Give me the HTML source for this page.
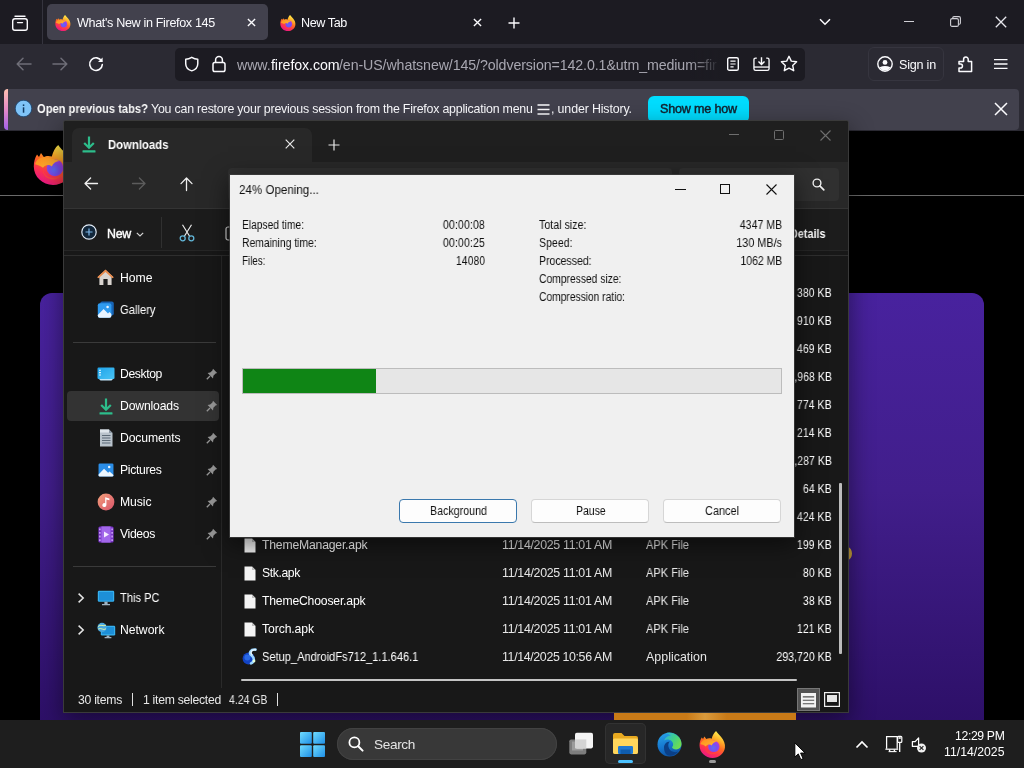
<!DOCTYPE html>
<html><head><meta charset="utf-8"><title>Screenshot</title>
<style>
*{box-sizing:border-box;margin:0;padding:0}
html,body{width:1024px;height:768px;overflow:hidden;background:#000;font-family:"Liberation Sans",sans-serif;}
.a{position:absolute}
.t{position:absolute;white-space:pre;line-height:1;will-change:transform}
svg{position:absolute;overflow:visible}
/* firefox chrome */
#tabs{left:0;top:0;width:1024px;height:44px;background:#1c1b22}
#atab{left:47px;top:4px;width:221px;height:36px;background:#42414d;border-radius:5px}
#nav{left:0;top:44px;width:1024px;height:87px;background:#2b2a33}
#url{left:175px;top:48px;width:630px;height:33px;background:#1c1b22;border-radius:5px}
#nbar{left:4px;top:89px;width:1015px;height:40.5px;background:#42414d;border-radius:4px}
#nbarL{left:4px;top:89px;width:3.5px;height:41px;border-radius:4px 0 0 4px;background:linear-gradient(#ffc0b0,#e58ac8 50%,#a060e8)}
#smh{left:648px;top:96px;width:101px;height:27px;background:#00ddff;border-radius:6px}
/* page */
#hline{left:0;top:195px;width:1024px;height:1px;background:#6a6a6a}
#card{left:40px;top:293px;width:944px;height:440px;background:linear-gradient(180deg,#48229e 0%,#411e8b 45%,#2c0f66 100%);border-radius:12px}
/* explorer */
#ex{left:64px;top:121px;width:784px;height:591px;background:#181818;border-radius:2px 2px 0 0;overflow:hidden;box-shadow:0 0 0 1px #3a3a3a,0 8px 24px 2px rgba(0,0,0,.45)}
/* taskbar */
#tb{left:0;top:720px;width:1024px;height:48px;background:#1e1e1e}
/* 7zip */
#dlg{left:230px;top:175px;width:564px;height:362px;background:#f0f0f0;box-shadow:0 0 0 1px rgba(60,60,60,.8),0 6px 22px 2px rgba(0,0,0,.5)}
</style></head><body>

<!-- FIREFOX -->
<div class="a" id="tabs"></div>
<div class="a" id="atab"></div>
<div class="a" id="nav"></div>
<div class="a" id="url"></div>
<div class="a" id="nbar"></div><div class="a" id="nbarL"></div>
<div class="a" id="smh"></div>
<div class="a" style="left:42.3px;top:0px;width:1px;height:44px;background:#35343e;"></div>
<svg style="left:11px;top:14px;" width="18" height="18" viewBox="0 0 18 18"><rect x="1.7" y="4.7" width="14.6" height="11.6" rx="2.2" fill="none" stroke="#fbfbfe" stroke-width="1.4"/><path d="M4 2.2h10" stroke="#fbfbfe" stroke-width="1.4" stroke-linecap="round"/><path d="M6.5 8.6h5" stroke="#fbfbfe" stroke-width="1.4" stroke-linecap="round"/></svg>
<svg style="left:55px;top:14.5px;" width="16" height="16" viewBox="0 0 100 100"><defs>
<linearGradient id="fa1" x1="0.8" y1="0" x2="0.3" y2="1"><stop offset="0.05" stop-color="#fff14f"/><stop offset="0.3" stop-color="#ffb02a"/><stop offset="0.52" stop-color="#ff6a22"/><stop offset="0.75" stop-color="#ff3350"/><stop offset="1" stop-color="#e8158a"/></linearGradient>
<radialGradient id="fb1" cx="0.45" cy="0.62" r="0.6"><stop offset="0" stop-color="#5b6df8"/><stop offset="0.55" stop-color="#7a4df0"/><stop offset="1" stop-color="#b13be0"/></radialGradient>
<linearGradient id="fc1" x1="0" y1="0" x2="1" y2="0.8"><stop offset="0" stop-color="#ff8a1c"/><stop offset="1" stop-color="#ffb830"/></linearGradient></defs>
<path d="M10 24 L15 30 L20 20 L27 30 C32 27 40 26 47 29 C50 16 56 6 63 0 C68 8 76 14 82 22 C92 34 98 48 96 62 C93 84 74 100 50 100 C24 100 2 80 2 54 C2 42 5 32 10 24 Z" fill="url(#fa1)"/>
<circle cx="55" cy="57" r="21" fill="url(#fb1)"/>
<path d="M5 48 C10 32 28 26 44 33 C52 37 60 35 66 40 C58 41 50 45 47 54 C41 48 31 49 25 57 C19 51 11 50 5 48 Z" fill="url(#fc1)"/>
<path d="M25 57 C24 70 34 82 50 82 C62 82 72 76 76 66 C72 78 60 88 46 86 C32 84 22 72 25 57 Z" fill="#ff5a2a" opacity="0.55"/></svg>
<div class="t" style="left:76.5px;top:16.8px;font-size:12.6px;color:#fbfbfe;letter-spacing:-0.346px;">What&#x27;s New in Firefox 145</div>
<svg style="left:246.5px;top:18px;" width="9" height="9" viewBox="0 0 10 10"><path d="M1 1L9 9M9 1L1 9" stroke="#fbfbfe" stroke-width="1.5"/></svg>
<svg style="left:280px;top:14.5px;" width="16" height="16" viewBox="0 0 100 100"><defs>
<linearGradient id="fa2" x1="0.8" y1="0" x2="0.3" y2="1"><stop offset="0.05" stop-color="#fff14f"/><stop offset="0.3" stop-color="#ffb02a"/><stop offset="0.52" stop-color="#ff6a22"/><stop offset="0.75" stop-color="#ff3350"/><stop offset="1" stop-color="#e8158a"/></linearGradient>
<radialGradient id="fb2" cx="0.45" cy="0.62" r="0.6"><stop offset="0" stop-color="#5b6df8"/><stop offset="0.55" stop-color="#7a4df0"/><stop offset="1" stop-color="#b13be0"/></radialGradient>
<linearGradient id="fc2" x1="0" y1="0" x2="1" y2="0.8"><stop offset="0" stop-color="#ff8a1c"/><stop offset="1" stop-color="#ffb830"/></linearGradient></defs>
<path d="M10 24 L15 30 L20 20 L27 30 C32 27 40 26 47 29 C50 16 56 6 63 0 C68 8 76 14 82 22 C92 34 98 48 96 62 C93 84 74 100 50 100 C24 100 2 80 2 54 C2 42 5 32 10 24 Z" fill="url(#fa2)"/>
<circle cx="55" cy="57" r="21" fill="url(#fb2)"/>
<path d="M5 48 C10 32 28 26 44 33 C52 37 60 35 66 40 C58 41 50 45 47 54 C41 48 31 49 25 57 C19 51 11 50 5 48 Z" fill="url(#fc2)"/>
<path d="M25 57 C24 70 34 82 50 82 C62 82 72 76 76 66 C72 78 60 88 46 86 C32 84 22 72 25 57 Z" fill="#ff5a2a" opacity="0.55"/></svg>
<div class="t" style="left:301.0px;top:16.8px;font-size:12.6px;color:#fbfbfe;letter-spacing:-0.399px;">New Tab</div>
<svg style="left:472.5px;top:18px;" width="9" height="9" viewBox="0 0 10 10"><path d="M1 1L9 9M9 1L1 9" stroke="#fbfbfe" stroke-width="1.5"/></svg>
<svg style="left:508px;top:16.7px;" width="12" height="12" viewBox="0 0 12 12"><path d="M6 0.5V11.5M0.5 6H11.5" stroke="#fbfbfe" stroke-width="1.4"/></svg>
<svg style="left:819px;top:18px;" width="12" height="8" viewBox="0 0 12 8"><path d="M1 1.2L6 6.2L11 1.2" fill="none" stroke="#fbfbfe" stroke-width="1.5"/></svg>
<div class="a" style="left:904px;top:21px;width:10px;height:1px;background:#d0d0d6;"></div>
<svg style="left:950px;top:16px;" width="11" height="11" viewBox="0 0 11 11"><rect x="0.6" y="2.6" width="7.8" height="7.8" rx="1.5" fill="none" stroke="#d0d0d6" stroke-width="1.1"/><path d="M2.8 2.4V1.8Q2.8 0.6 4 0.6H9Q10.4 0.6 10.4 2V7Q10.4 8.2 9.2 8.2H8.6" fill="none" stroke="#d0d0d6" stroke-width="1.1"/></svg>
<svg style="left:995px;top:16px;" width="12" height="12" viewBox="0 0 12 12"><path d="M0.8 0.8L11.2 11.2M11.2 0.8L0.8 11.2" stroke="#e8e8ee" stroke-width="1.3"/></svg>
<svg style="left:16px;top:57px;" width="16" height="14" viewBox="0 0 16 14"><path d="M15 7H1.5M7 1.2L1.2 7L7 12.8" fill="none" stroke="#6f6e78" stroke-width="1.5" stroke-linecap="round" stroke-linejoin="round"/></svg>
<svg style="left:52px;top:57px;" width="16" height="14" viewBox="0 0 16 14"><path d="M1 7H14.5M9 1.2L14.8 7L9 12.8" fill="none" stroke="#6f6e78" stroke-width="1.5" stroke-linecap="round" stroke-linejoin="round"/></svg>
<svg style="left:88px;top:56px;" width="16" height="16" viewBox="0 0 16 16"><path d="M13.6 5.2A6.3 6.3 0 1 0 14.3 8.6" fill="none" stroke="#fbfbfe" stroke-width="1.6" stroke-linecap="round"/><path d="M14.6 1.4V6H10Z" fill="#fbfbfe"/></svg>
<svg style="left:183.5px;top:56px;" width="15.5" height="16" viewBox="0 0 18 18"><path d="M9 1.2C11.5 2.8 13.8 3.4 16 3.4V8.6C16 12.6 13 15.6 9 17C5 15.6 2 12.6 2 8.6V3.4C4.2 3.4 6.5 2.8 9 1.2Z" fill="none" stroke="#fbfbfe" stroke-width="1.7" stroke-linejoin="round"/></svg>
<svg style="left:212px;top:55px;" width="14" height="18" viewBox="0 0 14 18"><rect x="1" y="7.6" width="12" height="9" rx="1.8" fill="none" stroke="#fbfbfe" stroke-width="1.5"/><path d="M3.6 7.4V5A3.4 3.4 0 0 1 10.4 5V7.4" fill="none" stroke="#fbfbfe" stroke-width="1.5"/></svg>
<div class="t" style="left:237.0px;top:58.2px;font-size:14.2px;color:#a8a7b1;letter-spacing:-0.108px;">www.</div>
<div class="t" style="left:270.5px;top:58.2px;font-size:14.2px;color:#fbfbfe;letter-spacing:-0.080px;">firefox.com</div>
<div class="t" style="left:339.0px;top:58.2px;font-size:14.2px;color:#a8a7b1;letter-spacing:-0.090px;">/en-US/whatsnew/145/?oldversion=142.0.1&amp;utm_medium=fir</div>
<div class="a" style="left:690px;top:50px;width:30px;height:29px;background:linear-gradient(90deg,rgba(28,27,34,0),#1c1b22);"></div>
<svg style="left:727px;top:57px;" width="12" height="14" viewBox="0 0 12 14"><rect x="0.7" y="0.7" width="10.6" height="12.6" rx="1.6" fill="none" stroke="#fbfbfe" stroke-width="1.4"/><path d="M3.4 4.2H8.6M3.4 7H8.6M3.4 9.8H6.6" stroke="#fbfbfe" stroke-width="1.2"/></svg>
<svg style="left:752.6px;top:56px;" width="17" height="15.5" viewBox="0 0 18 16"><path d="M4 2H2.8Q1 2 1 3.8V13.2Q1 15 2.8 15H15.2Q17 15 17 13.2V3.8Q17 2 15.2 2H14" fill="none" stroke="#fbfbfe" stroke-width="1.4"/><path d="M1 11.5H17" stroke="#fbfbfe" stroke-width="1.4"/><path d="M9 1V8.5M5.8 5.6L9 8.8L12.2 5.6" fill="none" stroke="#fbfbfe" stroke-width="1.5"/></svg>
<svg style="left:780px;top:55px;" width="18" height="17" viewBox="0 0 18 17"><path d="M9 1.3L11.3 6.1L16.6 6.8L12.7 10.4L13.7 15.7L9 13.1L4.3 15.7L5.3 10.4L1.4 6.8L6.7 6.1Z" fill="none" stroke="#fbfbfe" stroke-width="1.4" stroke-linejoin="round"/></svg>
<div class="a" style="left:868px;top:47px;width:76px;height:34px;background:transparent;border:1px solid #36353f;border-radius:6px;"></div>
<svg style="left:876.8px;top:56.2px;" width="16" height="16" viewBox="0 0 16 16"><circle cx="8" cy="8" r="7.2" fill="none" stroke="#fbfbfe" stroke-width="1.4"/><circle cx="8" cy="6.4" r="2.4" fill="#fbfbfe"/><path d="M2.6 11.2Q8 8.6 13.4 11.2Q11.5 14.6 8 14.6Q4.5 14.6 2.6 11.2Z" fill="#fbfbfe"/></svg>
<div class="t" style="left:898.6px;top:58.5px;font-size:12.6px;color:#fbfbfe;letter-spacing:-0.218px;">Sign in</div>
<svg style="left:957px;top:55px;" width="17" height="18" viewBox="0 0 17 18"><path d="M2 6.6H6.6V4.3A2.3 2.3 0 0 1 11.2 4.3V6.6H14.6V16.6H2V13.1H3.4A2.05 2.05 0 0 0 3.4 9H2Z" fill="none" stroke="#fbfbfe" stroke-width="1.5" stroke-linejoin="round"/></svg>
<svg style="left:993.5px;top:58px;" width="14" height="12" viewBox="0 0 14 12"><path d="M0 1.6H13.5M0 6H13.5M0 10.4H13.5" stroke="#fbfbfe" stroke-width="1.4"/></svg>
<svg style="left:15px;top:100px;" width="17" height="17" viewBox="0 0 17 17"><circle cx="8.5" cy="8.5" r="8" fill="#7fc4f8"/><circle cx="8.5" cy="8.5" r="8.3" fill="none" stroke="#1d4f80" stroke-width="0.8"/><rect x="7.8" y="7.3" width="1.5" height="5.4" fill="#103a63"/><rect x="7.8" y="4.4" width="1.5" height="1.6" fill="#103a63"/></svg>
<div class="t" style="left:37.0px;top:102.9px;font-size:12.4px;color:#ffffff;transform:scaleX(0.9000);transform-origin:left center;font-weight:700;">Open previous tabs?</div>
<div class="t" style="left:151.0px;top:102.9px;font-size:12.4px;color:#fbfbfe;letter-spacing:-0.215px;">You can restore your previous session from the Firefox application menu</div>
<svg style="left:537px;top:104px;" width="13" height="11" viewBox="0 0 13 11"><path d="M0.5 1H12.5M0.5 5.5H12.5M0.5 10H12.5" stroke="#fbfbfe" stroke-width="1.4"/></svg>
<div class="t" style="left:551.0px;top:102.9px;font-size:12.4px;color:#fbfbfe;letter-spacing:-0.135px;">, under History.</div>
<div class="t" style="left:660.0px;top:103.3px;font-size:12.6px;color:#12202e;letter-spacing:-0.194px;-webkit-text-stroke:0.45px #12202e;">Show me how</div>
<svg style="left:994px;top:102px;" width="14" height="14" viewBox="0 0 14 14"><path d="M1 1L13 13M13 1L1 13" stroke="#fbfbfe" stroke-width="1.5"/></svg>


<!-- PAGE -->
<div class="a" id="hline"></div>
<div class="a" id="card"></div>
<svg style="left:32.5px;top:145px;" width="40" height="40" viewBox="0 0 100 100"><defs>
<linearGradient id="fap" x1="0.8" y1="0" x2="0.3" y2="1"><stop offset="0.05" stop-color="#fff14f"/><stop offset="0.3" stop-color="#ffb02a"/><stop offset="0.52" stop-color="#ff6a22"/><stop offset="0.75" stop-color="#ff3350"/><stop offset="1" stop-color="#e8158a"/></linearGradient>
<radialGradient id="fbp" cx="0.45" cy="0.62" r="0.6"><stop offset="0" stop-color="#5b6df8"/><stop offset="0.55" stop-color="#7a4df0"/><stop offset="1" stop-color="#b13be0"/></radialGradient>
<linearGradient id="fcp" x1="0" y1="0" x2="1" y2="0.8"><stop offset="0" stop-color="#ff8a1c"/><stop offset="1" stop-color="#ffb830"/></linearGradient></defs>
<path d="M10 24 L15 30 L20 20 L27 30 C32 27 40 26 47 29 C50 16 56 6 63 0 C68 8 76 14 82 22 C92 34 98 48 96 62 C93 84 74 100 50 100 C24 100 2 80 2 54 C2 42 5 32 10 24 Z" fill="url(#fap)"/>
<circle cx="55" cy="57" r="21" fill="url(#fbp)"/>
<path d="M5 48 C10 32 28 26 44 33 C52 37 60 35 66 40 C58 41 50 45 47 54 C41 48 31 49 25 57 C19 51 11 50 5 48 Z" fill="url(#fcp)"/>
<path d="M25 57 C24 70 34 82 50 82 C62 82 72 76 76 66 C72 78 60 88 46 86 C32 84 22 72 25 57 Z" fill="#ff5a2a" opacity="0.55"/></svg>
<div class="a" style="left:843px;top:547px;width:9px;height:13px;background:#c9a23a;border-radius:50%;"></div>


<!-- EXPLORER -->
<div class="a" id="ex">
<div class="a" style="left:0px;top:0px;width:784px;height:41px;background:#1f1f1f;"></div>
<div class="a" style="left:8px;top:7px;width:240px;height:36px;background:#282828;border-radius:7px 7px 0 0;"></div>
<div class="a" style="left:0px;top:41px;width:784px;height:46px;background:#282828;"></div>
<div class="a" style="left:0px;top:87px;width:784px;height:1px;background:#343434;"></div>
<div class="a" style="left:0px;top:88px;width:784px;height:41px;background:#1c1c1c;"></div>
<div class="a" style="left:0px;top:129px;width:784px;height:1px;background:#262626;"></div>
<div class="a" style="left:0px;top:134px;width:784px;height:1px;background:#2e2e2e;"></div>
<svg style="left:18px;top:14.5px;" width="14.0" height="17.0" viewBox="0 0 14 17"><path d="M7 0.5V11.5M2.2 7L7 11.8L11.8 7" fill="none" stroke="#2dbd8b" stroke-width="2.2"/><rect x="0.5" y="14.2" width="13" height="2.3" rx="0.6" fill="#2dbd8b"/></svg>
<div class="t" style="left:43.5px;top:18.3px;font-size:12.2px;color:#ffffff;transform:scaleX(0.9298);transform-origin:left center;font-weight:700;">Downloads</div>
<svg style="left:221px;top:18px;" width="10" height="10" viewBox="0 0 10 10"><path d="M0.7 0.7L9.3 9.3M9.3 0.7L0.7 9.3" stroke="#e8e8e8" stroke-width="1.2"/></svg>
<svg style="left:264px;top:18px;" width="12" height="12" viewBox="0 0 12 12"><path d="M6 0.5V11.5M0.5 6H11.5" stroke="#e8e8e8" stroke-width="1.2"/></svg>
<div class="a" style="left:665px;top:13px;width:10px;height:1px;background:#6e6e6e;"></div>
<svg style="left:710px;top:9px;" width="10" height="10" viewBox="0 0 10 10"><rect x="0.5" y="0.5" width="9" height="9" rx="1" fill="none" stroke="#6e6e6e" stroke-width="1"/></svg>
<svg style="left:756px;top:9px;" width="11" height="11" viewBox="0 0 11 11"><path d="M0.5 0.5L10.5 10.5M10.5 0.5L0.5 10.5" stroke="#6e6e6e" stroke-width="1.1"/></svg>
<svg style="left:20px;top:56px;" width="14" height="13" viewBox="0 0 14 13"><path d="M13.5 6.5H1.2M6.6 1L1 6.5L6.6 12" fill="none" stroke="#f0f0f0" stroke-width="1.3" stroke-linecap="round" stroke-linejoin="round"/></svg>
<svg style="left:68px;top:56px;" width="14" height="13" viewBox="0 0 14 13"><path d="M0.5 6.5H12.8M7.4 1L13 6.5L7.4 12" fill="none" stroke="#5c5c5c" stroke-width="1.3" stroke-linecap="round" stroke-linejoin="round"/></svg>
<svg style="left:116px;top:56px;" width="13" height="14" viewBox="0 0 13 14"><path d="M6.5 13.5V1.2M1 6.6L6.5 1L12 6.6" fill="none" stroke="#f0f0f0" stroke-width="1.3" stroke-linecap="round" stroke-linejoin="round"/></svg>
<div class="a" style="left:164px;top:47px;width:444px;height:33px;background:#303030;border-radius:4px;"></div>
<div class="a" style="left:615px;top:47px;width:160px;height:33px;background:#303030;border-radius:4px;"></div>
<svg style="left:748px;top:57px;" width="13" height="13" viewBox="0 0 13 13"><circle cx="5" cy="5" r="3.9" fill="none" stroke="#f0f0f0" stroke-width="1.4"/><path d="M7.8 7.8L11.8 11.8" stroke="#f0f0f0" stroke-width="1.7" stroke-linecap="round"/></svg>
<svg style="left:17px;top:103px;" width="16" height="16" viewBox="0 0 16 16"><circle cx="8" cy="8" r="7.2" fill="#12273b" stroke="#dfe9f5" stroke-width="1.2"/><path d="M8 4.5V11.5M4.5 8H11.5" stroke="#7db7ea" stroke-width="1.2"/></svg>
<div class="t" style="left:42.5px;top:106.9px;font-size:12.4px;color:#ffffff;letter-spacing:-0.269px;-webkit-text-stroke:0.4px #fff;">New</div>
<svg style="left:72px;top:110.5px;" width="8" height="5" viewBox="0 0 8 5"><path d="M0.8 0.8L4 4L7.2 0.8" fill="none" stroke="#d0d0d0" stroke-width="1.2"/></svg>
<div class="a" style="left:97px;top:96px;width:1px;height:31px;background:#303030;"></div>
<svg style="left:115px;top:103px;" width="16" height="18" viewBox="0 0 16 18"><path d="M3.5 0.8L10.6 12.2M12.5 0.8L5.4 12.2" stroke="#e8e8e8" stroke-width="1.2"/><circle cx="3.7" cy="14.3" r="2.5" fill="none" stroke="#62b6d8" stroke-width="1.3"/><circle cx="12.3" cy="14.3" r="2.5" fill="none" stroke="#62b6d8" stroke-width="1.3"/></svg>
<svg style="left:161px;top:105px;" width="8" height="16" viewBox="0 0 8 16"><rect x="1" y="1" width="10" height="13" rx="2" fill="none" stroke="#d8d8d8" stroke-width="1.2"/></svg>
<div class="t" style="left:726.0px;top:107.0px;font-size:12.2px;color:#ffffff;transform:scaleX(0.8873);transform-origin:left center;font-weight:700;">Details</div>
<div class="a" style="left:157px;top:135px;width:1px;height:432px;background:#2a2a2a;"></div>
<svg style="left:33px;top:148px;" width="17" height="17" viewBox="0 0 17 17"><path d="M8.5 1L16.5 8.2H14.6V16H2.4V8.2H0.5Z" fill="#d9d4cf"/><path d="M8.5 0.6L16.8 8.2L15.4 9.2L8.5 3L1.6 9.2L0.2 8.2Z" fill="#e98a4b"/><rect x="6.4" y="10" width="4.2" height="6" fill="#1b1b1b"/></svg>
<div class="t" style="left:55.6px;top:151.0px;font-size:12.2px;color:#ffffff;letter-spacing:-0.011px;">Home</div>
<svg style="left:33px;top:180px;" width="18" height="18" viewBox="0 0 18 18"><rect x="3.2" y="0.6" width="13.6" height="14" rx="2" fill="#1764b5"/><rect x="0.8" y="2.2" width="13.6" height="14.6" rx="2" fill="#2f9bf0"/><path d="M0.8 14L6.6 8L11 12.4L12.4 11L14.4 13V14.8Q14.4 16.8 12.4 16.8H2.8Q0.8 16.8 0.8 14.8Z" fill="#e9f4ff"/><circle cx="10.6" cy="6" r="1.3" fill="#e9f4ff"/></svg>
<div class="t" style="left:55.6px;top:182.8px;font-size:12.2px;color:#ffffff;transform:scaleX(0.9187);transform-origin:left center;">Gallery</div>
<div class="a" style="left:9px;top:221px;width:143px;height:1px;background:#3a3a3a;"></div>
<svg style="left:33px;top:246px;" width="18" height="14" viewBox="0 0 18 14"><defs><linearGradient id="dg" x1="0" y1="0" x2="1" y2="1"><stop offset="0" stop-color="#1fa3ea"/><stop offset="1" stop-color="#49c4f4"/></linearGradient></defs><rect x="0.5" y="0.5" width="17" height="11.5" rx="1.2" fill="url(#dg)"/><path d="M2 3.2H4M2 5.6H4M2 8H4" stroke="#dff3ff" stroke-width="1.1"/><path d="M2 12H16L14.5 13.6H3.5Z" fill="#bfe6fb"/></svg>
<div class="t" style="left:55.6px;top:247.0px;font-size:12.2px;color:#ffffff;letter-spacing:-0.394px;">Desktop</div>
<svg style="left:142px;top:247px;" width="12" height="12" viewBox="0 0 12 12"><path d="M7 0.8L11.2 5L9.6 5.6L7.4 7.8L7 10.4L1.6 5L4.2 4.6L6.4 2.4Z" fill="#979797"/><path d="M4 8L0.8 11.2" stroke="#979797" stroke-width="1.3"/></svg>
<div class="a" style="left:3px;top:270px;width:152px;height:30px;background:#333333;border-radius:4px;"></div>
<svg style="left:35px;top:276.5px;" width="14.0" height="17.0" viewBox="0 0 14 17"><path d="M7 0.5V11.5M2.2 7L7 11.8L11.8 7" fill="none" stroke="#2dbd8b" stroke-width="2.2"/><rect x="0.5" y="14.2" width="13" height="2.3" rx="0.6" fill="#2dbd8b"/></svg>
<div class="t" style="left:55.6px;top:279.0px;font-size:12.2px;color:#ffffff;letter-spacing:-0.151px;">Downloads</div>
<svg style="left:142px;top:279px;" width="12" height="12" viewBox="0 0 12 12"><path d="M7 0.8L11.2 5L9.6 5.6L7.4 7.8L7 10.4L1.6 5L4.2 4.6L6.4 2.4Z" fill="#979797"/><path d="M4 8L0.8 11.2" stroke="#979797" stroke-width="1.3"/></svg>
<svg style="left:35px;top:308px;" width="14" height="18" viewBox="0 0 14 18"><path d="M1 0.5H10L13.5 4V17.5H1Z" fill="#b9c3cc"/><path d="M10 0.5V4H13.5Z" fill="#8a97a3"/><path d="M3 6.5H11.5M3 9H11.5M3 11.5H11.5M3 14H11.5" stroke="#5d6b78" stroke-width="1.1"/><rect x="1" y="0.5" width="9" height="3" fill="#dfe6ec"/></svg>
<div class="t" style="left:55.6px;top:311.0px;font-size:12.2px;color:#ffffff;letter-spacing:-0.134px;">Documents</div>
<svg style="left:142px;top:311px;" width="12" height="12" viewBox="0 0 12 12"><path d="M7 0.8L11.2 5L9.6 5.6L7.4 7.8L7 10.4L1.6 5L4.2 4.6L6.4 2.4Z" fill="#979797"/><path d="M4 8L0.8 11.2" stroke="#979797" stroke-width="1.3"/></svg>
<svg style="left:34px;top:341px;" width="16" height="16" viewBox="0 0 18 16"><rect x="0.6" y="0.6" width="16.8" height="14.8" rx="1.6" fill="#2b8ee8"/><path d="M0.6 13L6.8 6.6L11.4 11.2L13 9.6L17.4 13.6V13.8Q17.4 15.4 15.8 15.4H2.2Q0.6 15.4 0.6 13.8Z" fill="#eef7ff"/><circle cx="12.6" cy="4.6" r="1.4" fill="#eef7ff"/></svg>
<div class="t" style="left:55.6px;top:343.0px;font-size:12.2px;color:#ffffff;letter-spacing:-0.321px;">Pictures</div>
<svg style="left:142px;top:343px;" width="12" height="12" viewBox="0 0 12 12"><path d="M7 0.8L11.2 5L9.6 5.6L7.4 7.8L7 10.4L1.6 5L4.2 4.6L6.4 2.4Z" fill="#979797"/><path d="M4 8L0.8 11.2" stroke="#979797" stroke-width="1.3"/></svg>
<svg style="left:33px;top:372px;" width="18" height="18" viewBox="0 0 18 18"><defs><linearGradient id="mg" x1="0" y1="0" x2="1" y2="1"><stop offset="0" stop-color="#f3a07a"/><stop offset="1" stop-color="#d9536a"/></linearGradient></defs><circle cx="9" cy="9" r="8.4" fill="url(#mg)"/><path d="M8.2 4.2L12.4 5.4V7.2L9.4 6.4V12A2 2 0 1 1 8.2 10.2Z" fill="#fff"/></svg>
<div class="t" style="left:55.6px;top:375.0px;font-size:12.2px;color:#ffffff;letter-spacing:-0.072px;">Music</div>
<svg style="left:142px;top:375px;" width="12" height="12" viewBox="0 0 12 12"><path d="M7 0.8L11.2 5L9.6 5.6L7.4 7.8L7 10.4L1.6 5L4.2 4.6L6.4 2.4Z" fill="#979797"/><path d="M4 8L0.8 11.2" stroke="#979797" stroke-width="1.3"/></svg>
<svg style="left:34px;top:404.5px;" width="16" height="17" viewBox="0 0 16 17"><rect x="0.4" y="0.4" width="15.2" height="16.2" rx="1.6" fill="#7a35c8"/><rect x="3.4" y="0.4" width="9.2" height="16.2" fill="#a267ea"/><path d="M1.9 2.4V15" stroke="#d9b8ff" stroke-width="1.3" stroke-dasharray="1.8 1.8"/><path d="M14.1 2.4V15" stroke="#d9b8ff" stroke-width="1.3" stroke-dasharray="1.8 1.8"/><path d="M6 5.4L11 8.5L6 11.6Z" fill="#f6ecff"/></svg>
<div class="t" style="left:55.6px;top:407.0px;font-size:12.2px;color:#ffffff;letter-spacing:-0.347px;">Videos</div>
<svg style="left:142px;top:407px;" width="12" height="12" viewBox="0 0 12 12"><path d="M7 0.8L11.2 5L9.6 5.6L7.4 7.8L7 10.4L1.6 5L4.2 4.6L6.4 2.4Z" fill="#979797"/><path d="M4 8L0.8 11.2" stroke="#979797" stroke-width="1.3"/></svg>
<div class="a" style="left:9px;top:445px;width:143px;height:1px;background:#3a3a3a;"></div>
<svg style="left:14px;top:472px;" width="6" height="10" viewBox="0 0 6 10"><path d="M0.6 0.6L5.2 5L0.6 9.4" fill="none" stroke="#e6e6e6" stroke-width="1.5"/></svg>
<svg style="left:33px;top:469px;" width="18" height="16" viewBox="0 0 18 16"><rect x="0.8" y="0.8" width="16.4" height="11" rx="1.2" fill="#35b0ee"/><rect x="2" y="2" width="14" height="8.6" fill="#1d8fd8"/><path d="M7.4 11.8H10.6V14H13V15.2H5V14H7.4Z" fill="#9fb3c2"/></svg>
<div class="t" style="left:55.6px;top:471.0px;font-size:12.2px;color:#ffffff;transform:scaleX(0.9104);transform-origin:left center;">This PC</div>
<svg style="left:14px;top:504px;" width="6" height="10" viewBox="0 0 6 10"><path d="M0.6 0.6L5.2 5L0.6 9.4" fill="none" stroke="#e6e6e6" stroke-width="1.5"/></svg>
<svg style="left:33px;top:501px;" width="19" height="17" viewBox="0 0 19 17"><rect x="3.8" y="3.8" width="14.4" height="9.6" rx="1.2" fill="#35b0ee"/><rect x="5" y="5" width="12" height="7.2" fill="#1d8fd8"/><path d="M9.6 13.4H12.4V15H14.4V16.2H7.6V15H9.6Z" fill="#9fb3c2"/><circle cx="5" cy="5.4" r="4.6" fill="#4aa8e0"/><path d="M1 4.6Q3 2.6 5 3.4T9 3.2M1.2 7Q3.4 6 5.2 7T9 6.8" stroke="#d8f0a8" stroke-width="1" fill="none"/></svg>
<div class="t" style="left:55.6px;top:503.0px;font-size:12.2px;color:#ffffff;letter-spacing:-0.035px;">Network</div>
<div class="t" style="left:727.1px;top:165.9px;font-size:12.4px;color:#ffffff;transform:scaleX(0.8550);transform-origin:right center;">380 KB</div>
<div class="t" style="left:727.1px;top:193.9px;font-size:12.4px;color:#ffffff;transform:scaleX(0.8550);transform-origin:right center;">910 KB</div>
<div class="t" style="left:727.1px;top:221.9px;font-size:12.4px;color:#ffffff;transform:scaleX(0.8550);transform-origin:right center;">469 KB</div>
<div class="t" style="left:716.8px;top:249.9px;font-size:12.4px;color:#ffffff;transform:scaleX(0.8550);transform-origin:right center;">3,968 KB</div>
<div class="t" style="left:727.1px;top:277.9px;font-size:12.4px;color:#ffffff;transform:scaleX(0.8550);transform-origin:right center;">774 KB</div>
<div class="t" style="left:727.1px;top:305.9px;font-size:12.4px;color:#ffffff;transform:scaleX(0.8550);transform-origin:right center;">214 KB</div>
<div class="t" style="left:716.8px;top:333.9px;font-size:12.4px;color:#ffffff;transform:scaleX(0.8550);transform-origin:right center;">1,287 KB</div>
<div class="t" style="left:734.0px;top:361.9px;font-size:12.4px;color:#ffffff;transform:scaleX(0.8550);transform-origin:right center;">64 KB</div>
<div class="t" style="left:727.1px;top:389.9px;font-size:12.4px;color:#ffffff;transform:scaleX(0.8550);transform-origin:right center;">424 KB</div>
<div class="t" style="left:727.1px;top:417.9px;font-size:12.4px;color:#ffffff;transform:scaleX(0.8550);transform-origin:right center;">199 KB</div>
<div class="t" style="left:734.0px;top:445.9px;font-size:12.4px;color:#ffffff;transform:scaleX(0.8550);transform-origin:right center;">80 KB</div>
<div class="t" style="left:734.0px;top:473.9px;font-size:12.4px;color:#ffffff;transform:scaleX(0.8550);transform-origin:right center;">38 KB</div>
<div class="t" style="left:727.1px;top:501.9px;font-size:12.4px;color:#ffffff;transform:scaleX(0.8550);transform-origin:right center;">121 KB</div>
<div class="t" style="left:703.0px;top:529.9px;font-size:12.4px;color:#ffffff;transform:scaleX(0.8550);transform-origin:right center;">293,720 KB</div>
<svg style="left:180px;top:416.5px;" width="12" height="15" viewBox="0 0 12 15"><path d="M0.5 0.5H8L11.5 4V14.5H0.5Z" fill="#f4f4f4"/><path d="M8 0.5V4H11.5Z" fill="#bdbdbd"/></svg>
<div class="t" style="left:198.2px;top:418.0px;font-size:12.2px;color:#ffffff;letter-spacing:-0.188px;">ThemeManager.apk</div>
<div class="t" style="left:438.0px;top:417.9px;font-size:12.4px;color:#e6e6e6;letter-spacing:-0.319px;">11/14/2025 11:01 AM</div>
<div class="t" style="left:582.0px;top:417.9px;font-size:12.4px;color:#e6e6e6;transform:scaleX(0.8914);transform-origin:left center;">APK File</div>
<svg style="left:180px;top:444.5px;" width="12" height="15" viewBox="0 0 12 15"><path d="M0.5 0.5H8L11.5 4V14.5H0.5Z" fill="#f4f4f4"/><path d="M8 0.5V4H11.5Z" fill="#bdbdbd"/></svg>
<div class="t" style="left:198.2px;top:446.0px;font-size:12.2px;color:#ffffff;letter-spacing:-0.384px;">Stk.apk</div>
<div class="t" style="left:438.0px;top:445.9px;font-size:12.4px;color:#e6e6e6;letter-spacing:-0.319px;">11/14/2025 11:01 AM</div>
<div class="t" style="left:582.0px;top:445.9px;font-size:12.4px;color:#e6e6e6;transform:scaleX(0.8914);transform-origin:left center;">APK File</div>
<svg style="left:180px;top:472.5px;" width="12" height="15" viewBox="0 0 12 15"><path d="M0.5 0.5H8L11.5 4V14.5H0.5Z" fill="#f4f4f4"/><path d="M8 0.5V4H11.5Z" fill="#bdbdbd"/></svg>
<div class="t" style="left:198.2px;top:474.0px;font-size:12.2px;color:#ffffff;letter-spacing:-0.186px;">ThemeChooser.apk</div>
<div class="t" style="left:438.0px;top:473.9px;font-size:12.4px;color:#e6e6e6;letter-spacing:-0.319px;">11/14/2025 11:01 AM</div>
<div class="t" style="left:582.0px;top:473.9px;font-size:12.4px;color:#e6e6e6;transform:scaleX(0.8914);transform-origin:left center;">APK File</div>
<svg style="left:180px;top:500.5px;" width="12" height="15" viewBox="0 0 12 15"><path d="M0.5 0.5H8L11.5 4V14.5H0.5Z" fill="#f4f4f4"/><path d="M8 0.5V4H11.5Z" fill="#bdbdbd"/></svg>
<div class="t" style="left:198.2px;top:502.0px;font-size:12.2px;color:#ffffff;letter-spacing:-0.099px;">Torch.apk</div>
<div class="t" style="left:438.0px;top:501.9px;font-size:12.4px;color:#e6e6e6;letter-spacing:-0.319px;">11/14/2025 11:01 AM</div>
<div class="t" style="left:582.0px;top:501.9px;font-size:12.4px;color:#e6e6e6;transform:scaleX(0.8914);transform-origin:left center;">APK File</div>
<svg style="left:178px;top:527px;" width="16" height="17" viewBox="0 0 16 17"><circle cx="6.6" cy="10.6" r="6" fill="#1243c4"/><circle cx="5.4" cy="9.4" r="3" fill="#2a6ae6"/><path d="M13.6 1.6C8.6 1 6.4 5 9.6 7.6C12.6 10 12.8 13.6 9 15.4" fill="none" stroke="#9bd6ff" stroke-width="2.6" stroke-linecap="round"/><path d="M13.4 1.8C9.4 1.6 7.8 4.6 10 6.8" fill="none" stroke="#e8f6ff" stroke-width="1.4" stroke-linecap="round"/><circle cx="12" cy="13" r="1.4" fill="#e6ffd8"/></svg>
<div class="t" style="left:198.2px;top:530.0px;font-size:12.2px;color:#ffffff;transform:scaleX(0.9084);transform-origin:left center;">Setup_AndroidFs712_1.1.646.1</div>
<div class="t" style="left:438.0px;top:529.9px;font-size:12.4px;color:#e6e6e6;letter-spacing:-0.367px;">11/14/2025 10:56 AM</div>
<div class="t" style="left:582.0px;top:529.9px;font-size:12.4px;color:#e6e6e6;letter-spacing:0.031px;">Application</div>
<div class="a" style="left:177px;top:557.8px;width:556px;height:2.5px;background:#c4c4c4;border-radius:1px;"></div>
<div class="a" style="left:775.2px;top:362px;width:2.5px;height:171px;background:#bcbcbc;border-radius:1px;"></div>
<div class="t" style="left:14.0px;top:572.6px;font-size:12.2px;color:#e8e8e8;letter-spacing:-0.263px;">30 items</div>
<div class="a" style="left:68px;top:572px;width:1px;height:13px;background:#e0e0e0;"></div>
<div class="t" style="left:79.0px;top:572.6px;font-size:12.2px;color:#e8e8e8;letter-spacing:-0.270px;">1 item selected</div>
<div class="t" style="left:164.5px;top:572.6px;font-size:12.2px;color:#e8e8e8;transform:scaleX(0.8601);transform-origin:left center;">4.24 GB</div>
<div class="a" style="left:213px;top:572px;width:1px;height:13px;background:#e0e0e0;"></div>
<div class="a" style="left:733px;top:567px;width:23px;height:23px;background:#525252;box-shadow:inset 0 0 0 1px #767676;"></div>
<svg style="left:737px;top:572px;" width="15" height="14" viewBox="0 0 15 14"><rect x="0" y="0" width="15" height="14.5" fill="#f2f2f2"/><path d="M1.8 3.9H13.2M1.8 7.3H13.2M1.8 10.7H13.2" stroke="#505050" stroke-width="1.1"/></svg>
<svg style="left:760px;top:571px;" width="16" height="15" viewBox="0 0 16 15"><rect x="0.6" y="0.6" width="14.8" height="13.8" fill="none" stroke="#f0f0f0" stroke-width="1.2"/><rect x="3" y="3" width="10" height="7" fill="#e6e6e6"/></svg>

</div>

<!-- 7ZIP -->
<div class="a" id="dlg">
<div class="t" style="left:9.0px;top:8.8px;font-size:12.6px;color:#111111;transform:scaleX(0.9210);transform-origin:left center;">24% Opening...</div>
<div class="a" style="left:444.5px;top:14px;width:11px;height:1px;background:#111;"></div>
<svg style="left:490px;top:9px;" width="10" height="10" viewBox="0 0 10 10"><rect x="0.5" y="0.5" width="9" height="9" fill="none" stroke="#111" stroke-width="1"/></svg>
<svg style="left:535.5px;top:9px;" width="11" height="11" viewBox="0 0 11 11"><path d="M0.5 0.5L10.5 10.5M10.5 0.5L0.5 10.5" stroke="#111" stroke-width="1.1"/></svg>
<div class="t" style="left:12.0px;top:43.8px;font-size:12.3px;color:#111111;transform:scaleX(0.8320);transform-origin:left center;">Elapsed time:</div>
<div class="t" style="left:207.3px;top:43.8px;font-size:12.3px;color:#111111;transform:scaleX(0.8772);transform-origin:right center;">00:00:08</div>
<div class="t" style="left:12.0px;top:61.7px;font-size:12.3px;color:#111111;transform:scaleX(0.8406);transform-origin:left center;">Remaining time:</div>
<div class="t" style="left:207.3px;top:61.7px;font-size:12.3px;color:#111111;transform:scaleX(0.8772);transform-origin:right center;">00:00:25</div>
<div class="t" style="left:12.0px;top:79.8px;font-size:12.3px;color:#111111;transform:scaleX(0.7963);transform-origin:left center;">Files:</div>
<div class="t" style="left:221.0px;top:79.8px;font-size:12.3px;color:#111111;transform:scaleX(0.8566);transform-origin:right center;">14080</div>
<div class="t" style="left:308.8px;top:44.0px;font-size:12.3px;color:#111111;transform:scaleX(0.8667);transform-origin:left center;">Total size:</div>
<div class="t" style="left:502.5px;top:44.0px;font-size:12.3px;color:#111111;transform:scaleX(0.8613);transform-origin:right center;">4347 MB</div>
<div class="t" style="left:308.8px;top:62.0px;font-size:12.3px;color:#111111;transform:scaleX(0.8593);transform-origin:left center;">Speed:</div>
<div class="t" style="left:499.7px;top:62.0px;font-size:12.3px;color:#111111;transform:scaleX(0.8796);transform-origin:right center;">130 MB/s</div>
<div class="t" style="left:308.8px;top:79.8px;font-size:12.3px;color:#111111;transform:scaleX(0.8549);transform-origin:left center;">Processed:</div>
<div class="t" style="left:502.5px;top:79.8px;font-size:12.3px;color:#111111;transform:scaleX(0.8470);transform-origin:right center;">1062 MB</div>
<div class="t" style="left:308.8px;top:98.2px;font-size:12.3px;color:#111111;transform:scaleX(0.8371);transform-origin:left center;">Compressed size:</div>
<div class="t" style="left:308.8px;top:115.6px;font-size:12.3px;color:#111111;transform:scaleX(0.8331);transform-origin:left center;">Compression ratio:</div>
<div class="a" style="left:12px;top:193px;width:540px;height:26px;background:#e6e6e6;border:1px solid #bcbcbc;"></div>
<div class="a" style="left:13px;top:194px;width:133px;height:24px;background:#0f8515;"></div>
<div class="a" style="left:169.3px;top:323.6px;width:118px;height:24px;background:#fdfdfd;border:1px solid #3a78ad;border-radius:4px;"></div>
<div class="t" style="left:199.8px;top:329.6px;font-size:12.3px;color:#111111;transform:scaleX(0.8683);transform-origin:left center;">Background</div>
<div class="a" style="left:301.29999999999995px;top:323.6px;width:118px;height:24px;background:#fdfdfd;border:1px solid #d6d6d6;border-radius:4px;border-bottom-color:#bdbdbd;"></div>
<div class="t" style="left:345.5px;top:329.6px;font-size:12.3px;color:#111111;transform:scaleX(0.8487);transform-origin:left center;">Pause</div>
<div class="a" style="left:433.29999999999995px;top:323.6px;width:118px;height:24px;background:#fdfdfd;border:1px solid #d6d6d6;border-radius:4px;border-bottom-color:#bdbdbd;"></div>
<div class="t" style="left:475.3px;top:329.6px;font-size:12.3px;color:#111111;transform:scaleX(0.8880);transform-origin:left center;">Cancel</div>

</div>

<!-- TASKBAR -->
<div class="a" id="tb">
<div class="a" style="left:614px;top:-7.5px;width:182px;height:7.5px;background:linear-gradient(90deg,#c97a17 0%,#c97a17 40%,#d99a3c 50%,#c97a17 62%,#c97a17 100%);"></div>
<svg style="left:300px;top:12px;" width="25" height="25" viewBox="0 0 25 25"><defs><linearGradient id="wl" x1="0" y1="0" x2="1" y2="1"><stop offset="0" stop-color="#6fdcff"/><stop offset="1" stop-color="#1f8fe6"/></linearGradient></defs><rect x="0" y="0" width="11.8" height="11.8" rx="1" fill="url(#wl)"/><rect x="13.2" y="0" width="11.8" height="11.8" rx="1" fill="url(#wl)"/><rect x="0" y="13.2" width="11.8" height="11.8" rx="1" fill="url(#wl)"/><rect x="13.2" y="13.2" width="11.8" height="11.8" rx="1" fill="url(#wl)"/></svg>
<div class="a" style="left:337px;top:8px;width:220px;height:32px;background:#383838;border-radius:16px;box-shadow:inset 0 0 0 1px #424242;"></div>
<svg style="left:348px;top:16px;" width="16" height="16" viewBox="0 0 16 16"><circle cx="6.4" cy="6.4" r="5" fill="none" stroke="#fff" stroke-width="1.8"/><path d="M10.2 10.2L14.6 14.6" stroke="#fff" stroke-width="2" stroke-linecap="round"/></svg>
<div class="t" style="left:374.0px;top:17.9px;font-size:13.6px;color:#e4e4e4;letter-spacing:-0.349px;">Search</div>
<svg style="left:569px;top:12px;" width="25" height="24" viewBox="0 0 25 24"><rect x="0.3" y="7.4" width="17" height="15" rx="1.8" fill="#7d7d7d"/><rect x="3" y="9.5" width="11" height="9" fill="#9c9c9c"/><rect x="6" y="0.8" width="18" height="15.6" rx="1.8" fill="#f4f4f4"/><rect x="6" y="7.4" width="11.3" height="9" fill="#d4d4d4"/></svg>
<div class="a" style="left:605px;top:3px;width:41px;height:41px;background:#272727;border-radius:5px;box-shadow:inset 0 0 0 1px #323232;"></div>
<svg style="left:612px;top:12px;" width="27" height="24" viewBox="0 0 27 24"><path d="M1 3Q1 1 3 1H9.5L12.5 4H24Q26 4 26 6V20Q26 22 24 22H3Q1 22 1 20Z" fill="#e8a920"/><path d="M1 8Q1 6.5 2.5 6.5H24.5Q26 6.5 26 8V20Q26 22 24 22H3Q1 22 1 20Z" fill="#ffd65c"/><rect x="6" y="14" width="15" height="8" rx="1.2" fill="#1e78d2"/><rect x="8.5" y="17.5" width="10" height="4.5" fill="#0f5cad"/></svg>
<div class="a" style="left:618px;top:40px;width:15px;height:3px;background:#4cc2ff;border-radius:2px;"></div>
<svg style="left:657px;top:12px;" width="25" height="25" viewBox="0 0 25 25"><defs><linearGradient id="eg1" x1="0" y1="0" x2="0.3" y2="1"><stop offset="0" stop-color="#2aa7ea"/><stop offset="0.6" stop-color="#1678d0"/><stop offset="1" stop-color="#0d56a8"/></linearGradient><linearGradient id="eg2" x1="0" y1="0" x2="1" y2="0.6"><stop offset="0" stop-color="#2cb0e6"/><stop offset="0.55" stop-color="#3fcf8a"/><stop offset="1" stop-color="#6fdc52"/></linearGradient></defs><circle cx="12.5" cy="12.5" r="12" fill="url(#eg1)"/><path d="M9 1.2C16 -1 24.5 4.5 24.5 11.8C24.5 15.4 22 17.4 19.2 17.4C16.8 17.4 15.2 16.4 15 15.2C16.8 13.4 16.4 10.6 14.6 9C12.6 7.2 9.4 7 7 8.4C8.6 5.2 11 3.6 14 3.6C12 2.2 10.4 1.6 9 1.2Z" fill="url(#eg2)"/><path d="M7 15.6C7 12.2 9.6 9.8 12.8 9.6C11 11.4 10.8 14.2 12.2 16.8C13.8 19.6 17.2 21 21 19.6C18.4 23.6 13.4 24.8 9.8 22.8C8 21.4 7 18.6 7 15.6Z" fill="#0b3f86"/></svg>
<svg style="left:699px;top:11px;" width="27" height="27" viewBox="0 0 100 100"><defs>
<linearGradient id="fat" x1="0.8" y1="0" x2="0.3" y2="1"><stop offset="0.05" stop-color="#fff14f"/><stop offset="0.3" stop-color="#ffb02a"/><stop offset="0.52" stop-color="#ff6a22"/><stop offset="0.75" stop-color="#ff3350"/><stop offset="1" stop-color="#e8158a"/></linearGradient>
<radialGradient id="fbt" cx="0.45" cy="0.62" r="0.6"><stop offset="0" stop-color="#5b6df8"/><stop offset="0.55" stop-color="#7a4df0"/><stop offset="1" stop-color="#b13be0"/></radialGradient>
<linearGradient id="fct" x1="0" y1="0" x2="1" y2="0.8"><stop offset="0" stop-color="#ff8a1c"/><stop offset="1" stop-color="#ffb830"/></linearGradient></defs>
<path d="M10 24 L15 30 L20 20 L27 30 C32 27 40 26 47 29 C50 16 56 6 63 0 C68 8 76 14 82 22 C92 34 98 48 96 62 C93 84 74 100 50 100 C24 100 2 80 2 54 C2 42 5 32 10 24 Z" fill="url(#fat)"/>
<circle cx="55" cy="57" r="21" fill="url(#fbt)"/>
<path d="M5 48 C10 32 28 26 44 33 C52 37 60 35 66 40 C58 41 50 45 47 54 C41 48 31 49 25 57 C19 51 11 50 5 48 Z" fill="url(#fct)"/>
<path d="M25 57 C24 70 34 82 50 82 C62 82 72 76 76 66 C72 78 60 88 46 86 C32 84 22 72 25 57 Z" fill="#ff5a2a" opacity="0.55"/></svg>
<div class="a" style="left:709px;top:40px;width:7px;height:3px;background:#9a9a9a;border-radius:2px;"></div>
<svg style="left:794px;top:22.299999999999955px;" width="12" height="19" viewBox="0 0 14 22"><path d="M1 1V17.5L5 13.8L8 20.5L10.6 19.3L7.7 12.8H13Z" fill="#fff" stroke="#000" stroke-width="1.1"/></svg>
<svg style="left:855px;top:20px;" width="14" height="9" viewBox="0 0 14 9"><path d="M1.5 7.5L7 2L12.5 7.5" fill="none" stroke="#fff" stroke-width="1.7"/></svg>
<svg style="left:885px;top:15px;" width="19" height="18" viewBox="0 0 19 18"><path d="M1.6 13.8V1.6H12.2V13.8" fill="none" stroke="#fff" stroke-width="1.25"/><path d="M0.4 14.2H13.2" stroke="#fff" stroke-width="1.2"/><path d="M4.6 14.6V16.2M9.4 14.6V16.2" stroke="#fff" stroke-width="1.4"/><path d="M3.6 16.6H11.6" stroke="#fff" stroke-width="1.1"/><rect x="12.6" y="1.4" width="4.2" height="6" rx="0.9" fill="#1e1e1e" stroke="#fff" stroke-width="1.2"/><rect x="13.6" y="2.2" width="2.2" height="1.6" fill="#fff"/><path d="M14.7 7.6V17" stroke="#fff" stroke-width="1.3"/></svg>
<svg style="left:911px;top:17px;" width="18" height="17" viewBox="0 0 18 17"><path d="M1.4 4.6H4.2L7.6 0.9V9.4H4.2H1.4Z" fill="none" stroke="#fff" stroke-width="1.25" stroke-linejoin="round"/><circle cx="10.5" cy="11" r="4.5" fill="#f2f2f2"/><path d="M8.6 9.1L12.4 12.9M12.4 9.1L8.6 12.9" stroke="#2a2a2a" stroke-width="1.2"/></svg>
<div class="t" style="left:955.0px;top:10.3px;font-size:12.2px;color:#ffffff;letter-spacing:-0.340px;">12:29 PM</div>
<div class="t" style="left:944.0px;top:26.3px;font-size:12.2px;color:#ffffff;letter-spacing:0.035px;">11/14/2025</div>

</div>
</body></html>
